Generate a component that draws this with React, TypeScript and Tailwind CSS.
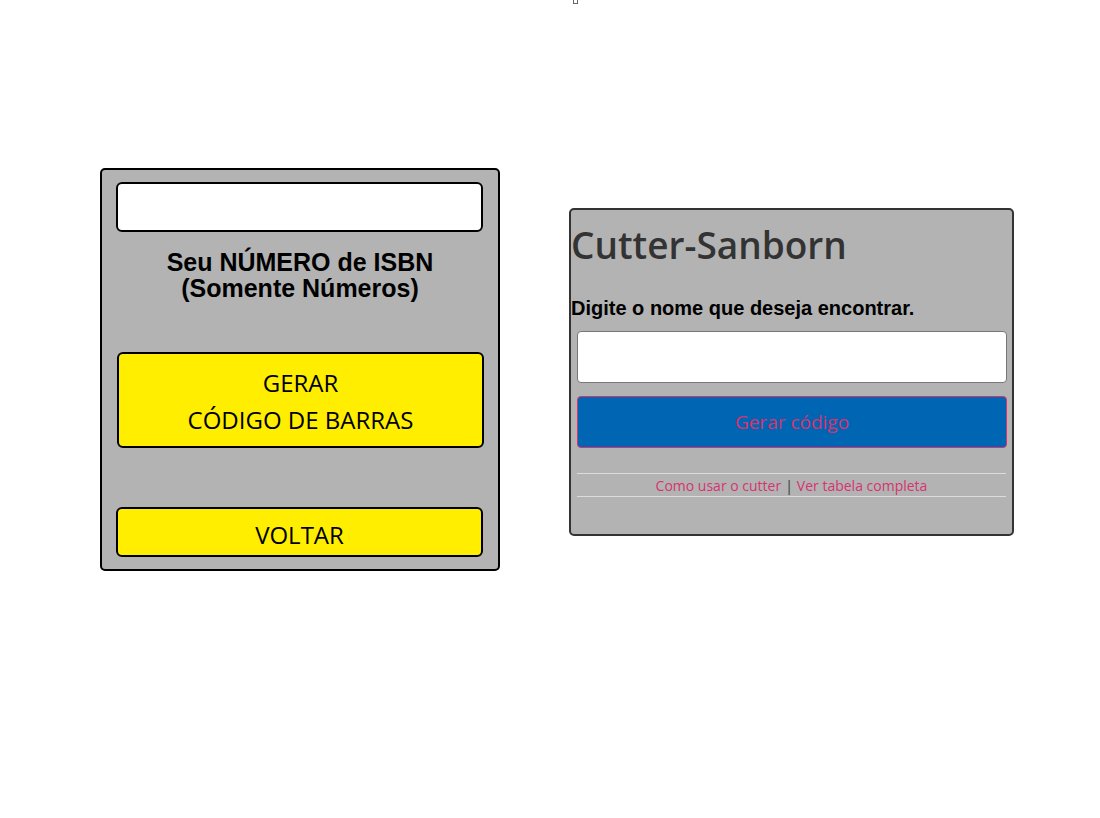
import React from 'react';

const segoe = { fontFamily: '"Segoe UI", "Open Sans", sans-serif' };
const arial = { fontFamily: '"Liberation Sans", Arial, sans-serif' };

function IsbnCard() {
  return (
    <div className="w-[400px] h-[403px] mt-[168px] bg-[#b3b3b3] border-2 border-black rounded-[5px] px-[14px] pt-[12px] flex flex-col">
      <input
        type="text"
        className="w-[367px] h-[50px] bg-white border-2 border-black rounded-[6px] outline-none"
      />
      <p className="mt-[17px] text-center text-[25px] leading-[26px] font-bold text-black" style={arial}>
        Seu NÚMERO de ISBN
        <br />
        (Somente Números)
      </p>
      <button
        className="mt-[51px] ml-px w-[367px] h-[96px] bg-[#ffee00] border-2 border-black rounded-[6px] text-[24px] leading-[37px] text-black pt-[1px]"
        style={segoe}
      >
        GERAR
        <br />
        CÓDIGO DE BARRAS
      </button>
      <button
        className="mt-[59px] w-[367px] h-[50px] bg-[#ffee00] border-2 border-black rounded-[6px] text-[24px] text-black pt-[5px]"
        style={segoe}
      >
        VOLTAR
      </button>
    </div>
  );
}

function CutterCard() {
  return (
    <div className="w-[445px] h-[328px] mt-[208px] bg-[#b3b3b3] border-2 border-[#333] rounded-[5px] flex flex-col">
      <h1 className="mt-[10px] text-[37px] leading-[50px] font-semibold text-[#333]" style={segoe}>
        Cutter-Sanborn
      </h1>
      <p className="mt-[27px] text-[20px] leading-[23px] font-bold text-black" style={arial}>
        Digite o nome que deseja encontrar.
      </p>
      <div className="px-[6px] mt-[11px] flex flex-col">
        <input
          type="text"
          className="w-[430px] h-[52px] bg-white border border-[#777] rounded-[4px] outline-none"
        />
        <button
          className="mt-[13px] w-[430px] h-[52px] bg-[#0066b3] border border-[#d63370] rounded-[4px] text-[19px] text-[#d63370] pt-[1px]"
          style={segoe}
        >
          Gerar código
        </button>
        <div
          className="mt-[25px] border-t border-b border-[#dcdcdc] h-[24px] flex items-center justify-center text-[14px]"
          style={segoe}
        >
          <a href="#" className="text-[#d63370]">Como usar o cutter</a>
          <span className="text-[#333] mx-[4px]">|</span>
          <a href="#" className="text-[#d63370]">Ver tabela completa</a>
        </div>
      </div>
    </div>
  );
}

export default function App() {
  return (
    <div className="w-[1100px] h-[818px] bg-white relative">
      <div className="absolute left-[573px] top-0 w-[5px] h-[4px] border border-t-0 border-[#666]" />
      <div className="flex items-start pl-[100px] gap-[69px]">
        <IsbnCard />
        <CutterCard />
      </div>
    </div>
  );
}
